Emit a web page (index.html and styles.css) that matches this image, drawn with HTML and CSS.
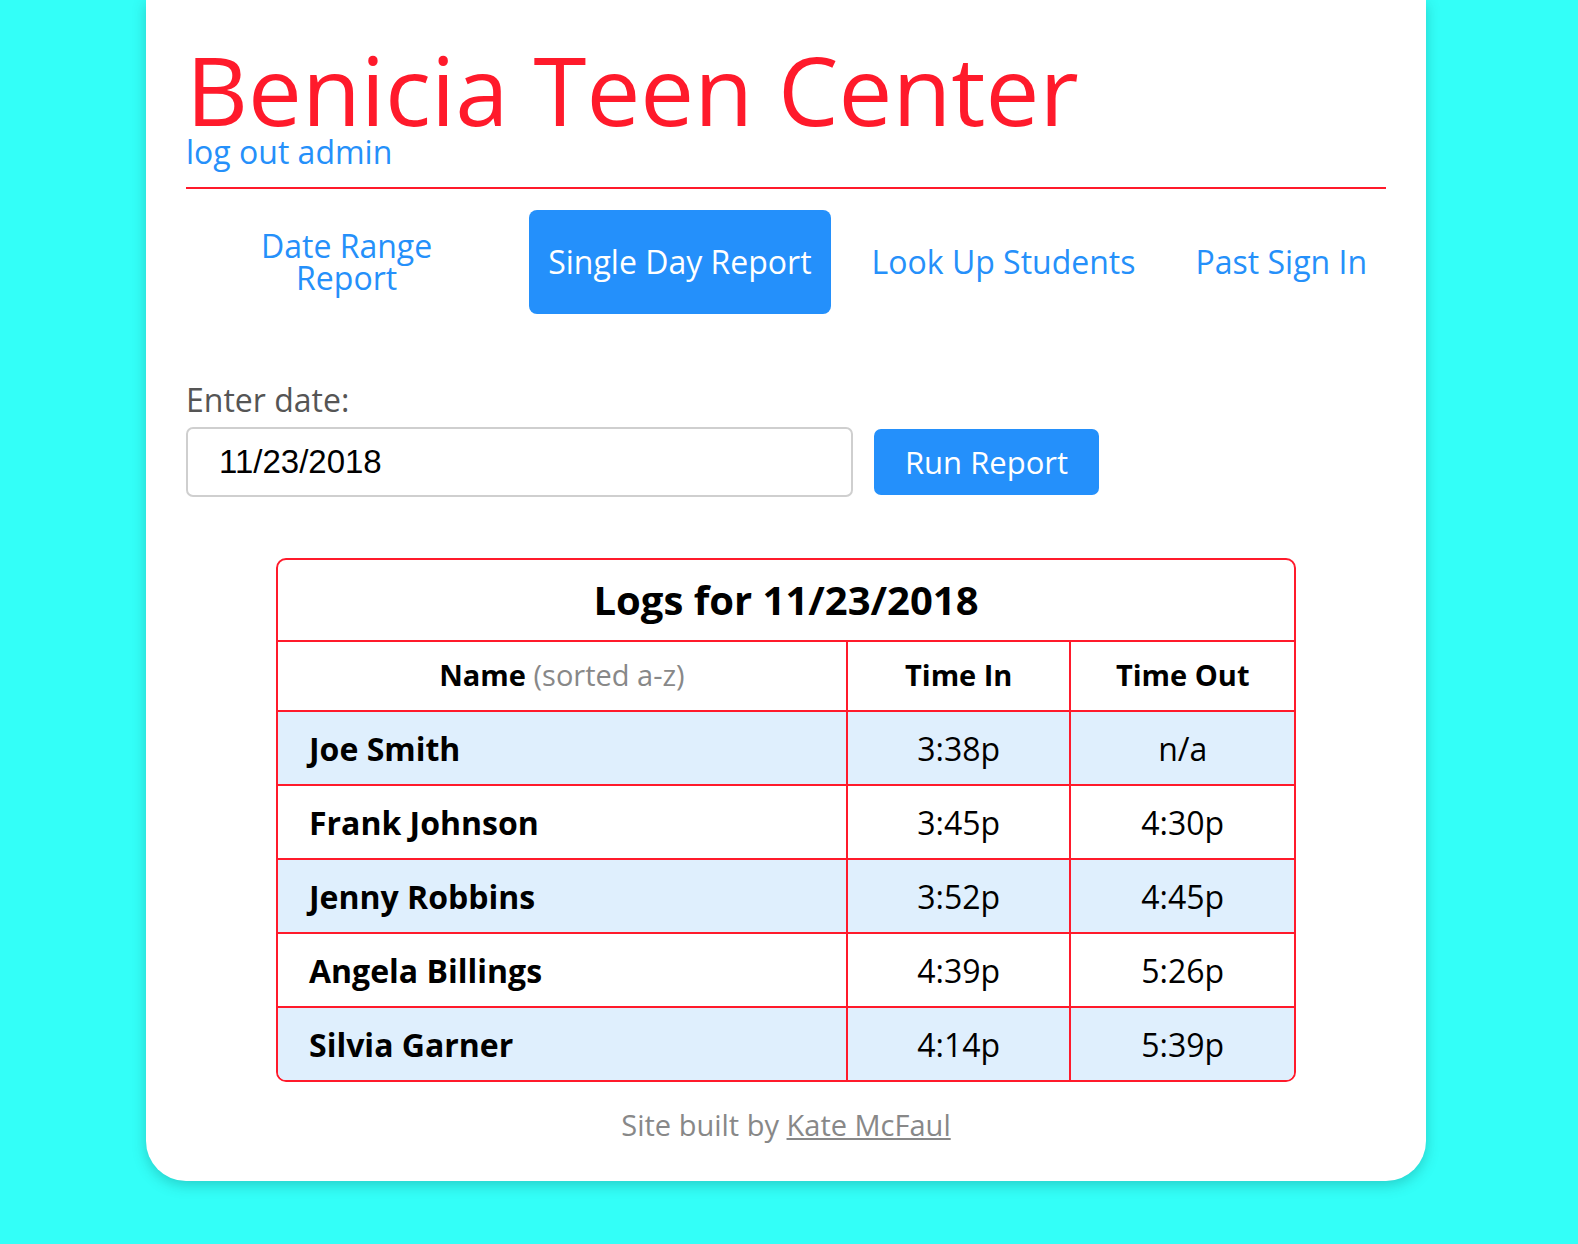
FILE: index.html
```html
<!DOCTYPE html>
<html lang="en">
<head>
<meta charset="utf-8">
<title>Benicia Teen Center</title>
<link rel="stylesheet" href="styles.css">
</head>
<body>
<div class="card">
  <header class="site-header">
    <h1 class="site-title">Benicia Teen Center</h1>
    <a class="logout" href="#">log out admin</a>
  </header>
  <nav class="tabs">
    <a class="tab tab-wide" href="#"><span class="tab-wrap">Date Range Report</span></a>
    <a class="tab tab-active" href="#">Single Day Report</a>
    <a class="tab" href="#">Look Up Students</a>
    <a class="tab" href="#">Past Sign In</a>
  </nav>
  <form class="date-form">
    <label class="date-label" for="date">Enter date:</label>
    <div class="date-row">
      <input class="date-input" id="date" type="text" value="11/23/2018">
      <button class="run-btn" type="button">Run Report</button>
    </div>
  </form>
  <div class="logs">
    <table class="logs-table">
      <caption class="logs-caption">Logs for 11/23/2018</caption>
      <colgroup>
        <col class="col-name">
        <col class="col-time">
        <col class="col-time">
      </colgroup>
      <thead>
        <tr>
          <th>Name <span class="sort-note">(sorted a-z)</span></th>
          <th>Time In</th>
          <th>Time Out</th>
        </tr>
      </thead>
      <tbody>
        <tr class="row-alt"><td class="name">Joe Smith</td><td>3:38p</td><td>n/a</td></tr>
        <tr><td class="name">Frank Johnson</td><td>3:45p</td><td>4:30p</td></tr>
        <tr class="row-alt"><td class="name">Jenny Robbins</td><td>3:52p</td><td>4:45p</td></tr>
        <tr><td class="name">Angela Billings</td><td>4:39p</td><td>5:26p</td></tr>
        <tr class="row-alt"><td class="name">Silvia Garner</td><td>4:14p</td><td>5:39p</td></tr>
      </tbody>
    </table>
  </div>
  <footer class="site-footer">Site built by <a href="#">Kate McFaul</a></footer>
</div>
</body>
</html>
```

FILE: styles.css
```css
html, body {
  margin: 0;
  padding: 0;
}
body {
  background: #33fff8;
  font-family: "Open Sans", "Noto Sans", sans-serif;
  min-height: 1244px;
}
.card {
  width: 1280px;
  margin: 0 0 0 146px;
  box-sizing: border-box;
  background: #fff;
  border-radius: 0 0 40px 40px;
  box-shadow: 0 4px 14px rgba(0, 60, 60, 0.25);
  padding: 42px 40px 36px;
}
.site-header {
  border-bottom: 2px solid #ff1a2b;
  padding-bottom: 19px;
}
.site-title {
  margin: 0;
  font-weight: 400;
  font-size: 96px;
  line-height: 94px;
  color: #ff1a2b;
}
.logout {
  display: block;
  font-size: 32px;
  line-height: 32px;
  color: #2590fa;
  text-decoration: none;
}
.tabs {
  display: flex;
  align-items: center;
  gap: 22px;
  margin-top: 21px;
}
.tab {
  display: block;
  font-size: 32px;
  line-height: 32px;
  color: #2590fa;
  text-decoration: none;
  padding: 36px 19px 36px;
  border-radius: 8px;
  white-space: nowrap;
}
.tab-wide {
  flex: 1;
  padding-top: 0;
  padding-bottom: 0;
  text-align: center;
  white-space: normal;
}
.tab-wrap {
  display: inline-block;
  max-width: 190px;
}
.tab-active {
  background: #2490fb;
  color: #fff;
}
.date-form {
  margin-top: 68px;
}
.date-label {
  display: block;
  font-size: 32px;
  line-height: 36px;
  color: #555;
  margin-bottom: 9px;
}
.date-row {
  display: flex;
  align-items: center;
  gap: 21px;
}
.date-input {
  width: 667px;
  height: 70px;
  box-sizing: border-box;
  border: 2px solid #cfcfcf;
  border-radius: 7px;
  padding: 0 31px;
  font-family: "Liberation Sans", Arial, sans-serif;
  font-size: 33px;
  color: #000;
  outline: none;
}
.run-btn {
  width: 225px;
  height: 66px;
  border: 0;
  border-radius: 7px;
  background: #2490fb;
  color: #fff;
  font-family: "Open Sans", sans-serif;
  font-size: 31px;
  padding: 0;
}
.logs {
  width: 85%;
  box-sizing: border-box;
  margin: 61px auto 0;
  border: 2px solid #ff1a2b;
  border-radius: 10px;
  overflow: hidden;
}
.logs-table {
  width: 100%;
  border-collapse: collapse;
  table-layout: fixed;
}
.col-name { width: 56%; }
.col-time { width: 22%; }
.logs-caption {
  font-weight: 700;
  font-size: 40px;
  line-height: 80px;
  color: #000;
  text-align: center;
}
.logs-table th,
.logs-table td {
  border-top: 2px solid #ff1a2b;
  border-left: 2px solid #ff1a2b;
  text-align: center;
  color: #000;
  padding: 0;
}
.logs-table th:first-child,
.logs-table td:first-child {
  border-left: 0;
}
.logs-table th {
  font-size: 29px;
  font-weight: 700;
  height: 65px;
  line-height: 36px;
  padding-bottom: 3px;
}
.sort-note {
  font-weight: 400;
  color: #888;
}
.logs-table td {
  font-size: 32px;
  height: 72px;
}
.logs-table td.name {
  text-align: left;
  font-weight: 700;
  padding-left: 31px;
}
.row-alt td {
  background: #dfeffd;
}
.site-footer {
  text-align: center;
  margin-top: 23px;
  font-size: 29px;
  line-height: 40px;
  color: #888;
}
.site-footer a {
  color: #888;
}
```
